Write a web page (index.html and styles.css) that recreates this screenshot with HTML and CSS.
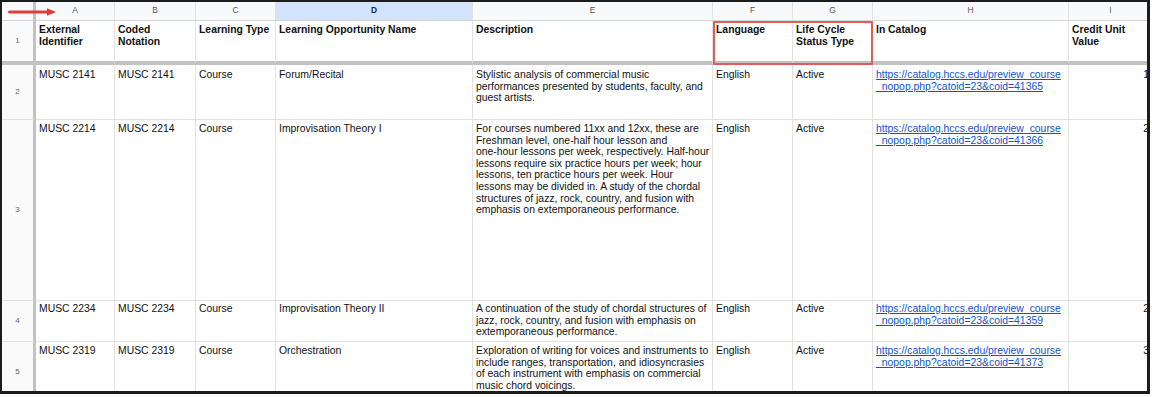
FILE: index.html
```html
<!DOCTYPE html>
<html lang="en">
<head>
  <meta charset="UTF-8" />
  <title>Course catalog sheet</title>
  <link rel="stylesheet" href="styles.css">
</head>
<body>
  <!-- Frame around the screenshot of the sheet -->
  <div class="sheet">
    <table class="grid">
      <colgroup>
        <col style="width: 34px">
        <col style="width: 79px">
        <col style="width: 81px">
        <col style="width: 80px">
        <col style="width: 197px">
        <col style="width: 240px">
        <col style="width: 80px">
        <col style="width: 80px">
        <col style="width: 196px">
        <col style="width: 84px">
      </colgroup>

      <!-- Column letters -->
      <thead>
        <tr class="letters">
          <th class="corner"></th>
          <th>A</th>
          <th>B</th>
          <th>C</th>
          <th class="picked">D</th>
          <th>E</th>
          <th>F</th>
          <th>G</th>
          <th>H</th>
          <th>I</th>
        </tr>
      </thead>

      <tbody>
        <!-- Header row (frozen) -->
        <tr class="row-head">
          <th class="num">1</th>
          <td>External Identifier</td>
          <td>Coded Notation</td>
          <td>Learning Type</td>
          <td>Learning Opportunity Name</td>
          <td>Description</td>
          <td>Language</td>
          <td>Life Cycle Status Type</td>
          <td>In Catalog</td>
          <td>Credit Unit Value</td>
        </tr>

        <tr class="row-2">
          <th class="num">2</th>
          <td>MUSC 2141</td>
          <td>MUSC 2141</td>
          <td>Course</td>
          <td>Forum/Recital</td>
          <td class="desc">Stylistic analysis of commercial music<br>performances presented by students, faculty, and<br>guest artists.</td>
          <td>English</td>
          <td>Active</td>
          <td class="link"><a href="#">https://catalog.hccs.edu/preview_course<br>_nopop.php?catoid=23&amp;coid=41365</a></td>
          <td class="credit">1</td>
        </tr>

        <tr class="row-3">
          <th class="num">3</th>
          <td>MUSC 2214</td>
          <td>MUSC 2214</td>
          <td>Course</td>
          <td>Improvisation Theory I</td>
          <td class="desc">For courses numbered 11xx and 12xx, these are<br>Freshman level, one-half hour lesson and<br>one-hour lessons per week, respectively. Half-hour<br>lessons require six practice hours per week; hour<br>lessons, ten practice hours per week. Hour<br>lessons may be divided in. A study of the chordal<br>structures of jazz, rock, country, and fusion with<br>emphasis on extemporaneous performance.</td>
          <td>English</td>
          <td>Active</td>
          <td class="link"><a href="#">https://catalog.hccs.edu/preview_course<br>_nopop.php?catoid=23&amp;coid=41366</a></td>
          <td class="credit">2</td>
        </tr>

        <tr class="row-4">
          <th class="num">4</th>
          <td>MUSC 2234</td>
          <td>MUSC 2234</td>
          <td>Course</td>
          <td>Improvisation Theory II</td>
          <td class="desc">A continuation of the study of chordal structures of<br>jazz, rock, country, and fusion with emphasis on<br>extemporaneous performance.</td>
          <td>English</td>
          <td>Active</td>
          <td class="link"><a href="#">https://catalog.hccs.edu/preview_course<br>_nopop.php?catoid=23&amp;coid=41359</a></td>
          <td class="credit">2</td>
        </tr>

        <tr class="row-5">
          <th class="num">5</th>
          <td>MUSC 2319</td>
          <td>MUSC 2319</td>
          <td>Course</td>
          <td>Orchestration</td>
          <td class="desc">Exploration of writing for voices and instruments to<br>include ranges, transportation, and idiosyncrasies<br>of each instrument with emphasis on commercial<br>music chord voicings.</td>
          <td>English</td>
          <td>Active</td>
          <td class="link"><a href="#">https://catalog.hccs.edu/preview_course<br>_nopop.php?catoid=23&amp;coid=41373</a></td>
          <td class="credit">3</td>
        </tr>
      </tbody>
    </table>

    <!-- Annotations drawn over the sheet -->
    <svg class="arrow" width="50" height="10" viewBox="0 0 50 10">
      <line x1="1.5" y1="5" x2="41" y2="5" stroke="#e23b3b" stroke-width="3" stroke-linecap="round"/>
      <polygon points="39,1.2 48,5 39,8.8" fill="#e23b3b"/>
    </svg>
    <div class="callout"></div>
  </div>
</body>
</html>
```

FILE: styles.css
```css
/* Page */
body {
  margin: 0;
  background: #fff;
  font-family: "Liberation Sans", Arial, sans-serif;
  color: #111;
}

/* Black frame around the sheet */
.sheet {
  position: relative;
  width: 1150px;
  height: 394px;
  box-sizing: border-box;
  border: 2px solid #1c1c1c;
  border-right-width: 3px;
  border-bottom-width: 3px;
  overflow: hidden;
}

/* The grid itself */
.grid {
  table-layout: fixed;
  border-collapse: separate;
  border-spacing: 0;
  width: 1151px;
  font-size: 10.4px;
  line-height: 11.6px;
}

.grid td,
.grid th {
  border-right: 1px solid #e2e2e2;
  border-bottom: 1px solid #e2e2e2;
  padding: 3px 3px 0;
  vertical-align: top;
  text-align: left;
  white-space: nowrap;
  overflow: hidden;
}

/* Column letters row */
.letters {
  height: 19px;
}

.letters th {
  background: #f8f9fa;
  color: #555;
  font-size: 8.4px;
  font-weight: normal;
  text-align: center;
  vertical-align: middle;
  padding: 0;
  border-bottom-color: #d6d6d6;
}

.letters th.picked {
  background: #d3e3fd;
  color: #0b2a5c;
  font-weight: bold;
}

.letters th.corner {
  border-right: 3px solid #c2c2c2;
}

/* Row numbers */
.num {
  background: #fafafa;
  color: #666;
  font-size: 8px;
  font-weight: normal;
}

.grid th.num {
  text-align: center;
  vertical-align: middle;
  padding: 0;
  border-right: 3px solid #c2c2c2;
}

/* Frozen header row */
.row-head {
  height: 44px;
}

.row-head td {
  font-weight: bold;
  white-space: normal;
  border-bottom: 4px solid #c2c2c2;
}

.grid .row-head th.num {
  border-bottom: 4px solid #c2c2c2;
}

.row-2 { height: 55px; }
.row-3 { height: 181px; }
.row-4 { height: 41px; }
.row-5 { height: 60px; }

.row-2 td { padding-top: 4px; }
.row-4 td { padding-top: 2px; }

/* Links to the catalog */
.link a {
  color: #1155cc;
  text-decoration: underline;
}

.grid td.credit {
  text-align: right;
}

/* Red arrow pointing at column A */
.arrow {
  position: absolute;
  left: 6px;
  top: 5px;
}

/* Red box around Language / Life Cycle Status Type */
.callout {
  position: absolute;
  left: 711px;
  top: 19px;
  width: 160px;
  height: 44px;
  box-sizing: border-box;
  border: 2px solid #e25c5c;
  border-radius: 1px;
}
```
